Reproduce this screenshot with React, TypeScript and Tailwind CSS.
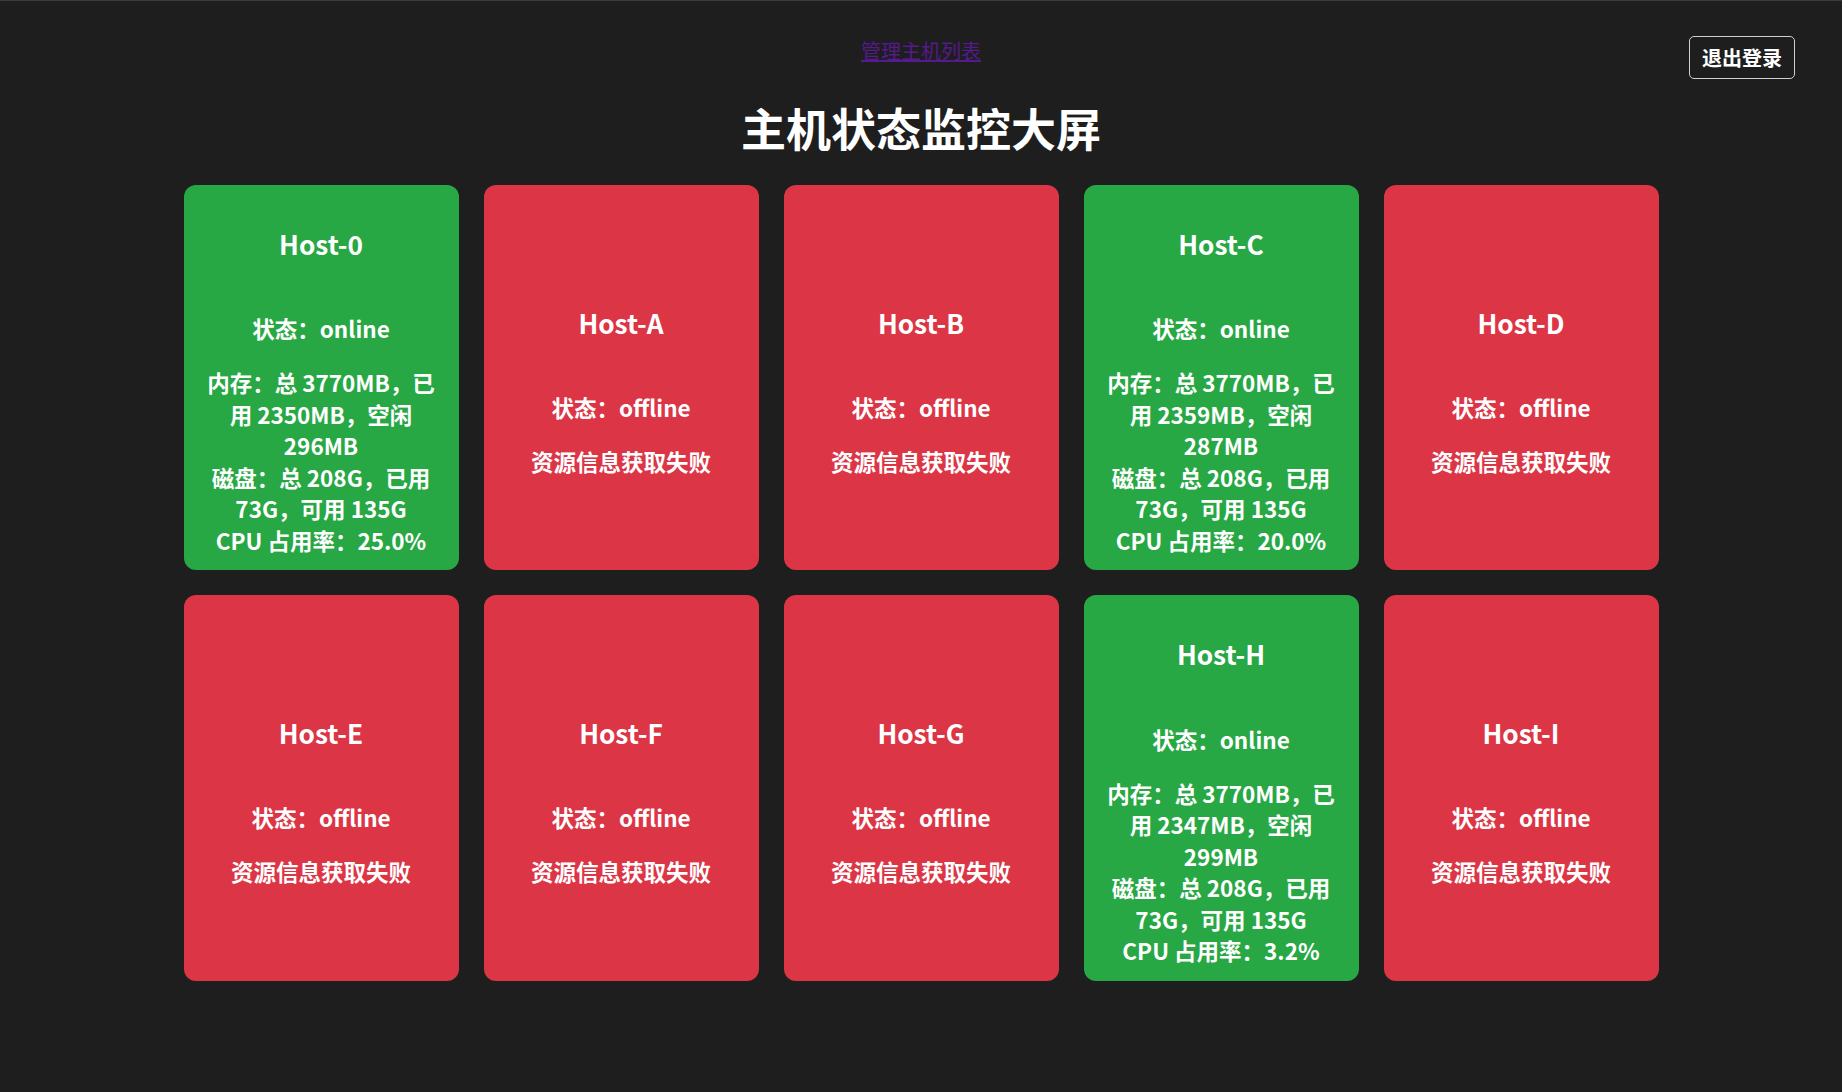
type Host = {
  name: string;
  online: boolean;
  mem?: { total: number; used: number; free: number };
  disk?: { total: number; used: number; avail: number };
  cpu?: string;
};

const hosts: Host[] = [
  { name: "Host-0", online: true, mem: { total: 3770, used: 2350, free: 296 }, disk: { total: 208, used: 73, avail: 135 }, cpu: "25.0" },
  { name: "Host-A", online: false },
  { name: "Host-B", online: false },
  { name: "Host-C", online: true, mem: { total: 3770, used: 2359, free: 287 }, disk: { total: 208, used: 73, avail: 135 }, cpu: "20.0" },
  { name: "Host-D", online: false },
  { name: "Host-E", online: false },
  { name: "Host-F", online: false },
  { name: "Host-G", online: false },
  { name: "Host-H", online: true, mem: { total: 3770, used: 2347, free: 299 }, disk: { total: 208, used: 73, avail: 135 }, cpu: "3.2" },
  { name: "Host-I", online: false },
];

const HostCard = ({ host }: { host: Host }) => {
  return (
    <div
      className={`flex flex-col justify-center rounded-[12px] px-5 pt-3 pb-[14px] text-center text-white ${
        host.online ? "bg-[#28a745]" : "bg-[#dc3545]"
      }`}
    >
      <h3 className="mt-[29px] text-[26.25px] font-bold leading-[36.75px]">{host.name}</h3>
      <p className="mt-[50.5px] text-[22.5px] font-bold leading-[31.5px]">
        状态：{host.online ? "online" : "offline"}
      </p>
      {host.online && host.mem && host.disk ? (
        <p className="mt-[22.5px] text-[22.5px] font-bold leading-[31.5px]">
          内存：总 {host.mem.total}MB，已用 {host.mem.used}MB，空闲 {host.mem.free}MB
          <br />
          磁盘：总 {host.disk.total}G，已用 {host.disk.used}G，可用 {host.disk.avail}G
          <br />
          CPU 占用率：{host.cpu}%
        </p>
      ) : (
        <p className="mt-[22.5px] text-[22.5px] font-bold leading-[31.5px]">资源信息获取失败</p>
      )}
    </div>
  );
};

export default function App() {
  return (
    <div className="min-h-[1092px] border-t border-[#3b3a40] bg-[#1e1e1e] font-['Noto_Sans_CJK_SC',sans-serif] text-white">
      <div className="grid grid-cols-[1fr_auto_1fr] items-start px-[47px] pt-[35px]">
        <div />
        <a href="#" className="mt-[1px] text-[20px] leading-[28px] text-[#551a8b] underline">
          管理主机列表
        </a>
        <button className="justify-self-end rounded-[5px] border border-[#d0d0d0] px-[12px] py-[6px] text-[20px] font-bold leading-[29px] text-white">
          退出登录
        </button>
      </div>
      <h1 className="mt-[17px] text-center text-[45px] font-bold leading-[63px]">主机状态监控大屏</h1>
      <div className="mx-auto mt-[26px] grid w-[1475px] grid-cols-5 gap-[25px]">
        {hosts.map((h) => (
          <HostCard key={h.name} host={h} />
        ))}
      </div>
    </div>
  );
}
